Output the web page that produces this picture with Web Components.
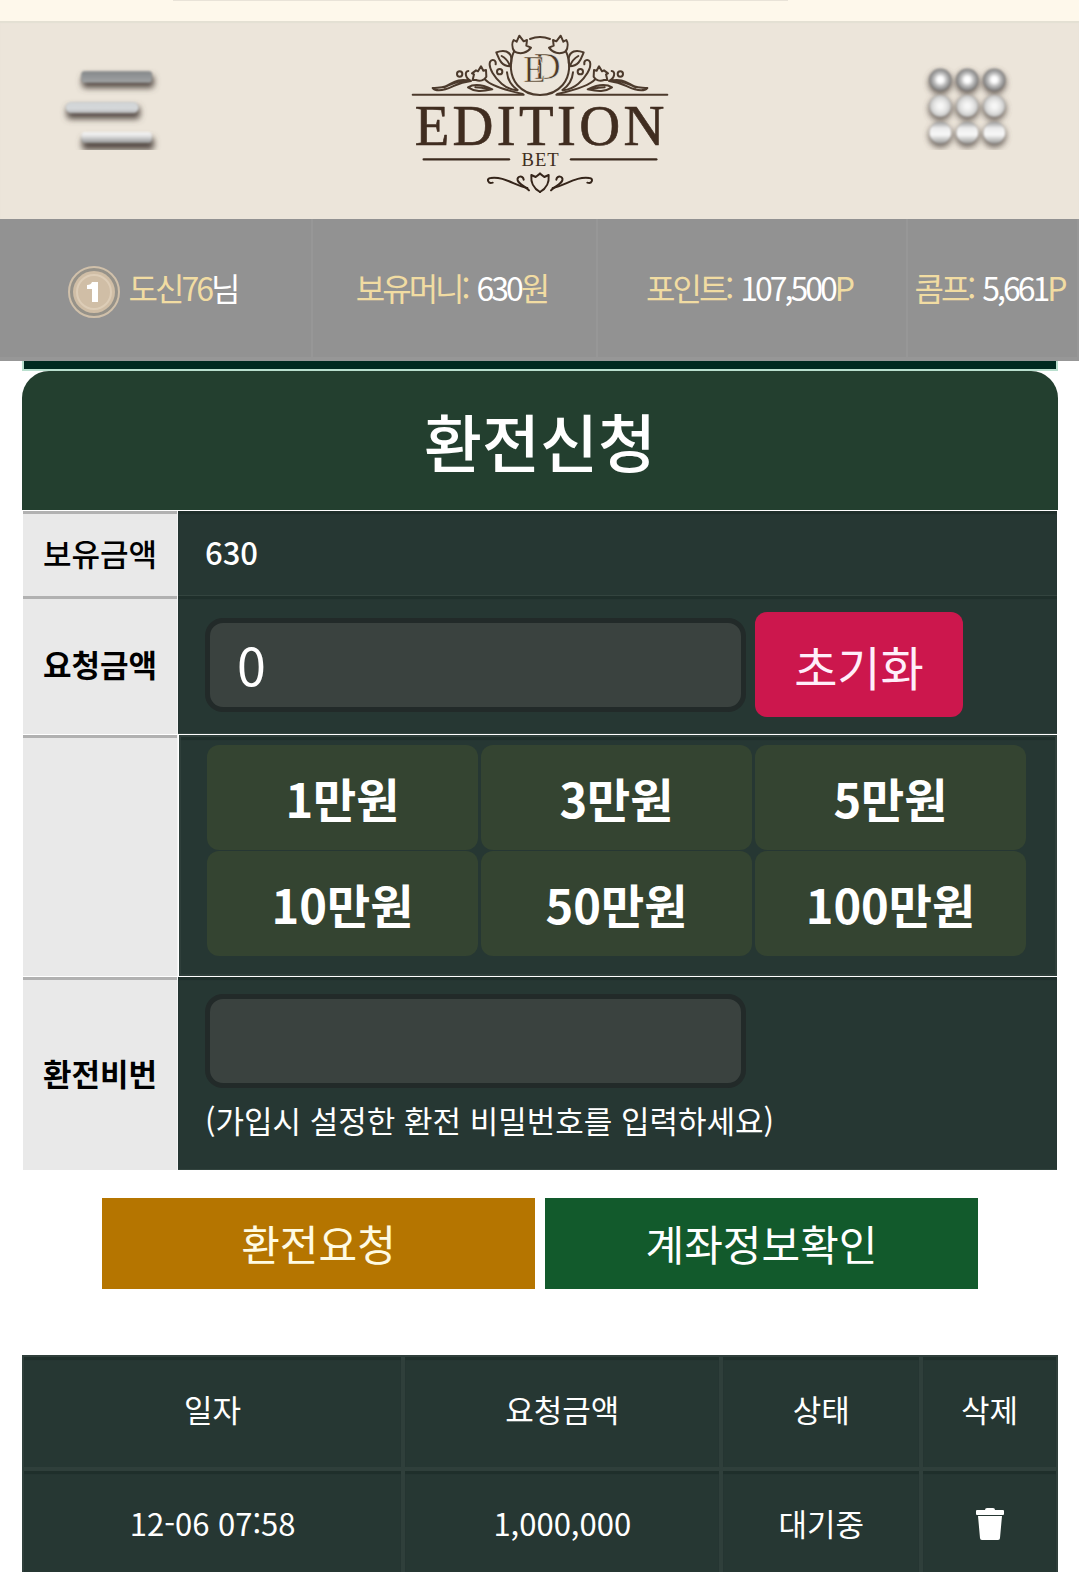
<!DOCTYPE html>
<html lang="ko">
<head>
<meta charset="utf-8">
<meta name="viewport" content="width=device-width, initial-scale=1">
<title>환전신청</title>
<style>
  html, body { margin: 0; height: 100%; }
  body { background: #fff; overflow: hidden; font-family: "Noto Sans CJK KR", "Noto Sans", sans-serif; font-size: 31px; line-height: 46px; }
</style>
</head>
<body>
<edition-app></edition-app>
<script>
const define = (name, html, setup) => {
  const template = document.createElement('template');
  template.innerHTML = html;
  customElements.define(name, class extends HTMLElement {
    constructor() {
      super();
      this.attachShadow({ mode: 'open' }).append(template.content.cloneNode(true));
      if (setup) setup(this.shadowRoot);
    }
  });
};

define('edition-logo', `
<style>:host{display:block} svg{display:block} a{display:block}</style>
<a href="#" aria-label="EDITION BET">
<svg width="280" height="179" viewBox="0 3 840 537" fill="none" stroke="#4c3a2c" stroke-width="6" stroke-linecap="round" stroke-linejoin="round">
  <defs>
    <g id="half">
      <path d="M38 224H371"/>
      <path d="M71 418H327" stroke="#3b2a1e" stroke-width="7"/>
      <path d="M343 92C326 128 330 170 352 195C370 216 394 225 420 225"/>
      <path d="M390 57Q405 51 420 51"/>
      <path d="M343 95C334 80 337 66 341 60L350 65L358 47L371 64L381 60L379 77L393 83C382 99 362 104 343 95Z"/>
      <path d="M331 139C302 138 297 116 289 97C312 88 331 93 334 115C335 124 334 132 331 139M305 108Q323 118 330 138"/>
      <path d="M287 133C289 119 275 116 270 126C264 144 285 174 305 191C319 203 334 209 351 211"/>
      <circle cx="299" cy="155" r="8"/>
      <path d="M321 157C323 179 335 198 353 210"/>
      <path d="M218 180L222 163L216 160L228 151L234 154L243 139L250 152L258 150L259 170C253 181 240 185 228 180Z"/>
      <path d="M255 178C270 196 307 208 368 222"/>
      <path d="M204 202C223 190 246 193 277 208C245 215 225 216 204 202ZM226 202Q245 202 263 207"/>
      <circle cx="179" cy="162" r="8"/>
      <path d="M205 153C193 153 195 175 213 183C171 174 160 189 136 199C124 204 112 202 98 204C105 212 120 212 136 208C160 202 172 187 213 183M133 202C155 193 169 182 200 182"/>
      <g stroke="#35251a">
        <path d="M278 488C265 493 257 475 272 474C311 468 345 497 382 504"/>
        <path d="M371 479C369 464 349 469 353 481C357 493 376 499 387 511"/>
        <path d="M420 516C398 503 392 488 394 465L407 471L420 461"/>
      </g>
    </g>
  </defs>
  <use href="#half"/><use href="#half" transform="translate(840 0) scale(-1 1)"/>
  <g font-family="Liberation Serif, serif" stroke="none" fill="#4c3a2c">
    <g font-size="112" fill="#4c3a2c" stroke="#ece5da" stroke-width="2">
      <text x="401" y="176">D</text>
      <text x="369" y="187">E</text>
    </g>
    <text x="44" y="374" font-size="170" fill="#402d20" stroke="#402d20" stroke-width="2" letter-spacing="10">EDITION</text>
    <text x="422" y="437" font-size="56" fill="#402d20" text-anchor="middle" letter-spacing="3">BET</text>
  </g>
</svg></a>`);

define('edition-header', `
<style>
  :host{display:block;background:#ece5da}
  .edge{height:21px;background:#fef8eb;display:flex}
  .edge i{width:57%;height:1px;margin-left:16%;background:#e9e3d8}
  header{display:flex;justify-content:space-between;align-items:center;padding:0 40px 19px;box-shadow:inset 0 2px 1px #e4e0d3}
  button{display:block;border:0;background:none;padding:0;cursor:pointer}
  svg{display:block}
</style>
<div class="edge"><i></i></div>
<header>
  <button type="button" aria-label="메뉴">
    <svg width="140" height="120" viewBox="0 3 420 360">
      <defs>
        <filter id="b" x="-20%" y="-100%" width="140%" height="350%"><feGaussianBlur stdDeviation="10"/></filter>
        <filter id="s" x="-5%" y="-20%" width="110%" height="140%"><feGaussianBlur stdDeviation="3"/></filter>
        <clipPath id="c"><path d="M0 0H420V300H0Z"/></clipPath>
        <linearGradient id="g1" x2="0" y2="1"><stop stop-color="#85888a"/><stop offset="1" stop-color="#a0a3a4"/></linearGradient>
        <linearGradient id="g2" x2="0" y2="1"><stop stop-color="#d0d4d6"/><stop offset=".6" stop-color="#d5d8da"/><stop offset="1" stop-color="#b0b1b2"/></linearGradient>
        <linearGradient id="g3" x2="0" y2="1"><stop stop-color="#f8f8f8"/><stop offset=".35" stop-color="#e4e4e4"/><stop offset="1" stop-color="#929394"/></linearGradient>
      </defs>
      <g clip-path="url(#c)">
        <g fill="#574d47" filter="url(#b)"><rect x="126" y="76" width="216" height="38" rx="12"/><rect x="80" y="169" width="220" height="38" rx="12"/><rect x="126" y="262" width="216" height="38" rx="12"/></g>
        <g filter="url(#s)"><rect x="124" y="64" width="212" height="34" rx="9" fill="url(#g1)"/><rect x="77" y="156" width="219" height="34" rx="17" fill="url(#g2)"/><rect x="124" y="246" width="212" height="33" rx="11" fill="url(#g3)"/></g>
      </g>
    </svg>
  </button>
  <edition-logo></edition-logo>
  <button type="button" aria-label="전체 메뉴">
    <svg width="140" height="120" viewBox="-3 3 420 360">
      <defs>
        <filter id="b" x="-30%" y="-30%" width="160%" height="160%"><feGaussianBlur stdDeviation="11"/></filter>
        <filter id="s" x="-10%" y="-10%" width="120%" height="120%"><feGaussianBlur stdDeviation="3"/></filter>
        <clipPath id="c"><path d="M0 50H420V300H0Z"/></clipPath>
        <radialGradient id="r1"><stop offset=".25" stop-color="#fff"/><stop offset=".6" stop-color="#b9b9b9"/><stop offset="1" stop-color="#808080"/></radialGradient>
        <radialGradient id="r2"><stop offset=".2" stop-color="#f7f7f6"/><stop offset=".65" stop-color="#e0e0df"/><stop offset="1" stop-color="#bdbdbc"/></radialGradient>
        <linearGradient id="r3" x2="0" y2="1"><stop stop-color="#999"/><stop offset=".3" stop-color="#ededed"/><stop offset=".6" stop-color="#f8f8f8"/><stop offset="1" stop-color="#9a9a98"/></linearGradient>
      </defs>
      <g clip-path="url(#c)">
        <g class="shade" fill="#574d47" opacity=".85" filter="url(#b)"></g>
        <g class="dots" filter="url(#s)"></g>
      </g>
    </svg>
  </button>
</header>`, root => {
  const xs = [121, 202, 283], ys = [89, 168, 248];
  const dots = (r, dy, fill) => ys.flatMap((y, i) => xs.map(x => `<circle cx="${x}" cy="${y + dy}" r="${r}" ${fill(i)}/>`)).join('');
  root.querySelector('.shade').innerHTML = dots(35, 9, () => '');
  root.querySelector('.dots').innerHTML = dots(33, 0, i => `fill="url(#r${i + 1})"`);
});

define('account-item', `
<style>
  :host{display:flex;align-items:center;justify-content:center;gap:9px;min-width:0;padding:0 8px 7px 0;white-space:nowrap;color:#fff;box-shadow:inset -2px -4px 0 #979797}
  ::slotted(b){font-weight:400;color:#f1dca2}
  ::slotted(.key){margin-right:3px}
</style>
<slot name="icon"></slot><span><slot></slot></span>`);

define('account-bar', `
<style>
  :host{display:grid;grid-template-columns:313fr 285fr 310fr 171fr;height:142px;background:#929292;font-size:32px;letter-spacing:-3px;box-shadow:inset 0 -1px 0 #8b9590}
  svg{display:block;margin-top:10px}
</style>
<account-item>
  <svg slot="icon" width="52" height="54" viewBox="0 0 52 54"><circle cx="26" cy="27" r="25" fill="#969289" stroke="#d0c0aa" stroke-width="2"/><circle cx="26" cy="27" r="21" fill="#d0bea6"/><circle cx="26" cy="27" r="17" fill="none" stroke="#ddcdb7" stroke-width="2"/><path d="M24 17h6v20h-6V24h-5v-4q4 0 5-3z" fill="#fff"/></svg>
  <b>도신76</b>님
</account-item>
<account-item><b class="key">보유머니:</b> 630<b>원</b></account-item>
<account-item><b class="key">포인트:</b> 107,500<b>P</b></account-item>
<account-item><b class="key">콤프:</b> 5,661<b>P</b></account-item>`);

define('form-row', `
<style>
  :host{display:grid;grid-template-columns:155px 1fr}
  .name{display:flex;align-items:center;justify-content:center;padding-bottom:2px;background:#e9e9e9;color:#000;border-right:1px solid #f4f4f4;box-shadow:inset 0 3px 0 #b1b1b1}
  .value{background:#263733;color:#fff;padding:var(--row-pad,20px 27px);box-shadow:inset 0 3px 1px #1f2f2b, inset 0 -1px 0 #33443f}
  :host([framed]) .value{margin-left:1px;box-shadow:inset 0 0 0 2px #2f3f3b, inset 0 5px 1px #1f2f2b}
</style>
<div class="name"><slot name="label"></slot></div>
<div class="value"><slot></slot></div>`);

define('withdraw-form', `
<style>
  :host{display:block}
  .strip{height:8px;background:#002a20;border:2px solid #b9dfce;border-top:0}
  h1{margin:0;padding:23px 0 24px;border-radius:27px 27px 0 0;background:#233f2f;color:#fff;text-align:center;font-size:63px;font-weight:500;line-height:92px}
  .rows{display:flex;flex-direction:column;padding:1px 1px 0}
  .medium{font-weight:500} .strong{font-weight:700}
  #r1{--row-pad:18px 27px 21px}
  #r2{--row-pad:16px 27px 17px} #r3{--row-pad:10px 31px 20px 28px;margin:1px 0} #r4{--row-pad:17px 27px 27px}
  .line{display:flex;align-items:center;gap:9px}
  input{box-sizing:border-box;width:541px;height:94px;border:5px solid #222a29;border-radius:18px;background:#3a423f;color:#fff;font:inherit;font-size:52px;padding:0 27px 2px;outline:0}
  button{border:0;cursor:pointer;font:inherit;color:#fff}
  .reset{width:208px;height:105px;padding:3px 0 0;border-radius:12px;background:#cc174d;font-size:47px;color:#ffeefa}
  .amounts{display:grid;grid-template-columns:repeat(3,1fr);gap:1px 3px}
  .amounts button{height:105px;padding:0;border-radius:12px;background:#344431;font-size:47px;font-weight:700}
  p{margin:9px 0 0}
  .actions{display:flex;justify-content:center;gap:10px;padding:28px 80px 0}
  .actions button{flex:1;height:91px;padding:0 0 2px;font-size:42px;background:#125a2c}
  .actions .send{background:#b57500;color:#fffbe3}
</style>
<div class="strip"></div>
<h1>환전신청</h1>
<form onsubmit="return false">
  <div class="rows">
    <form-row id="r1"><span slot="label" class="medium">보유금액</span><span class="medium">630</span></form-row>
    <form-row id="r2"><label slot="label" for="amount" class="strong">요청금액</label>
      <div class="line"><input id="amount" type="text" inputmode="numeric" value="0"><button class="reset" type="reset">초기화</button></div></form-row>
    <form-row id="r3" framed>
      <div class="amounts"><button type="button">1만원</button><button type="button">3만원</button><button type="button">5만원</button><button type="button">10만원</button><button type="button">50만원</button><button type="button">100만원</button></div></form-row>
    <form-row id="r4"><label slot="label" for="pin" class="strong">환전비번</label>
      <div class="line"><input id="pin" type="password"></div><p>(가입시 설정한 환전 비밀번호를 입력하세요)</p></form-row>
  </div>
  <div class="actions"><button class="send" type="submit">환전요청</button><button type="button">계좌정보확인</button></div>
</form>`);

define('history-table', `
<style>
  :host{display:block}
  table{width:100%;table-layout:fixed;border-spacing:0;border-collapse:separate;color:#fff;text-align:center}
  th,td{box-sizing:border-box;height:114px;padding:0 0 7px;border:2px solid #2f3f3b;background:#263733;box-shadow:inset 0 3px 1px #1f2f2b;font-weight:400}
  col:nth-child(1){width:36.8%} col:nth-child(2){width:30.7%} col:nth-child(3){width:19.3%} col:nth-child(4){width:13.2%}
  button{border:0;background:none;padding:3px 0 0;cursor:pointer;display:block;margin:0 auto}
  svg{display:block}
</style>
<table>
  <colgroup><col><col><col><col></colgroup>
  <thead><tr><th scope="col">일자</th><th scope="col">요청금액</th><th scope="col">상태</th><th scope="col">삭제</th></tr></thead>
  <tbody><tr><td>12-06 07:58</td><td>1,000,000</td><td>대기중</td><td><button type="button" aria-label="삭제"><svg width="28" height="32" viewBox="0 0 28 32" fill="#fff"><path d="M1 2h8q0-2 2-2h6q2 0 2 2h8q1 0 1 1v3q0 1-1 1H1Q0 7 0 6V3q0-1 1-1zM2 8h24l-2 22q0 2-2 2H6q-2 0-2-2z"/></svg></button></td></tr></tbody>
</table>`);

define('edition-app', `
<style>:host{display:block} main{padding:0 21px 0 22px} history-table{margin-top:66px}</style>
<edition-header></edition-header>
<account-bar></account-bar>
<main><withdraw-form></withdraw-form><history-table></history-table></main>`);
</script>
</body>
</html>
